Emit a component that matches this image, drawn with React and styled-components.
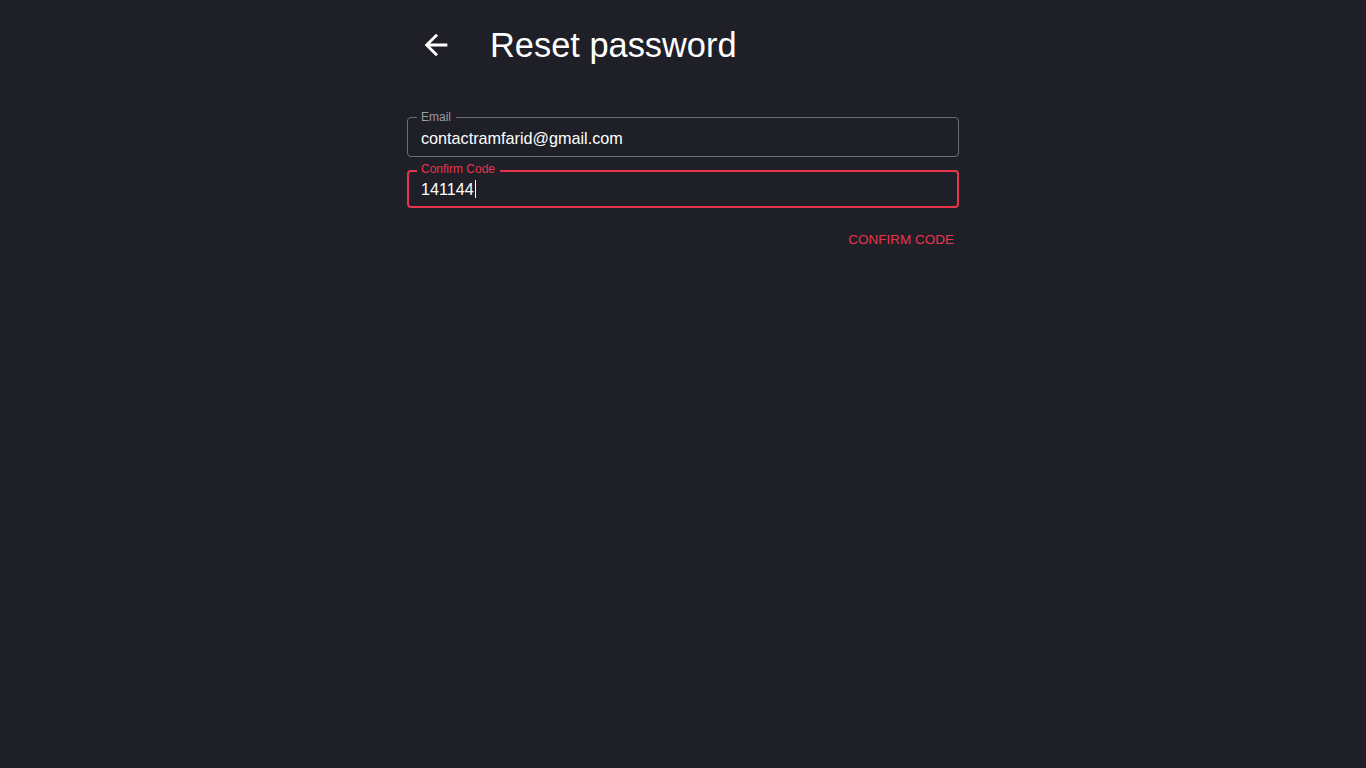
import React from "react";
import styled, { createGlobalStyle } from "styled-components";

const GlobalStyle = createGlobalStyle`
  html, body {
    margin: 0;
    padding: 0;
    background: #1f1f28;
    font-family: "Liberation Sans", Arial, sans-serif;
  }
`;

const Page = styled.main`
  min-height: 100vh;
  background: #1f1f28;
  display: flex;
  justify-content: center;
`;

const Column = styled.section`
  width: 552px;
  display: flex;
  flex-direction: column;
`;

const Header = styled.header`
  display: flex;
  align-items: center;
  height: 90px;
  padding-left: 12px;
`;

const BackButton = styled.button`
  width: 34px;
  height: 34px;
  padding: 0;
  border: none;
  background: transparent;
  color: #ffffff;
  display: flex;
  align-items: center;
  justify-content: center;
  cursor: pointer;
  margin-right: 37px;
`;

const Title = styled.h1`
  margin: 0;
  font-size: 34.4px;
  font-weight: 400;
  color: #ffffff;
`;

const Form = styled.form`
  display: flex;
  flex-direction: column;
  gap: 13px;
  margin-top: 27px;
`;

const Field = styled.div`
  position: relative;
  height: ${(p) => (p.$active ? "38px" : "40px")};
  box-sizing: border-box;
  border: ${(p) => (p.$active ? "2px solid #e8344c" : "1px solid #6e6e78")};
  border-radius: 4px;
  display: flex;
  align-items: center;
  padding: 0 ${(p) => (p.$active ? "12px" : "13px")};
`;

const Label = styled.span`
  position: absolute;
  top: ${(p) => (p.$active ? "-10px" : "-8px")};
  left: ${(p) => (p.$active ? "8px" : "9px")};
  padding: 0 5px 0 4px;
  background: #1f1f28;
  font-size: 12px;
  line-height: 14px;
  color: ${(p) => (p.$active ? "#e8344c" : "#9c9ca4")};
`;

const Value = styled.div`
  font-size: 16.2px;
  line-height: 18px;
  color: #ffffff;
  display: flex;
  align-items: center;
  margin-top: ${(p) => (p.$active ? "0" : "1px")};
`;

const Caret = styled.span`
  display: inline-block;
  width: 1px;
  height: 18px;
  background: #ffffff;
  margin-left: 1px;
`;

const Actions = styled.div`
  display: flex;
  justify-content: flex-end;
  margin-top: 3px;
`;

const TextButton = styled.button`
  border: none;
  background: transparent;
  color: #e8344c;
  font-family: "Liberation Sans", Arial, sans-serif;
  font-size: 13.5px;
  line-height: 16px;
  text-transform: uppercase;
  padding: 8px 5px;
  cursor: pointer;
`;

const ArrowBack = () => (
  <svg width="34" height="34" viewBox="0 0 24 24" fill="currentColor">
    <path d="M20 11H7.83l5.59-5.59L12 4l-8 8 8 8 1.41-1.41L7.83 13H20v-2z" />
  </svg>
);

export default function App() {
  return (
    <>
      <GlobalStyle />
      <Page>
        <Column>
          <Header>
            <BackButton aria-label="Back">
              <ArrowBack />
            </BackButton>
            <Title>Reset password</Title>
          </Header>
          <Form onSubmit={(e) => e.preventDefault()}>
            <Field>
              <Label>Email</Label>
              <Value>contactramfarid@gmail.com</Value>
            </Field>
            <Field $active>
              <Label $active>Confirm Code</Label>
              <Value $active>
                141144
                <Caret />
              </Value>
            </Field>
            <Actions>
              <TextButton type="submit">Confirm code</TextButton>
            </Actions>
          </Form>
        </Column>
      </Page>
    </>
  );
}
